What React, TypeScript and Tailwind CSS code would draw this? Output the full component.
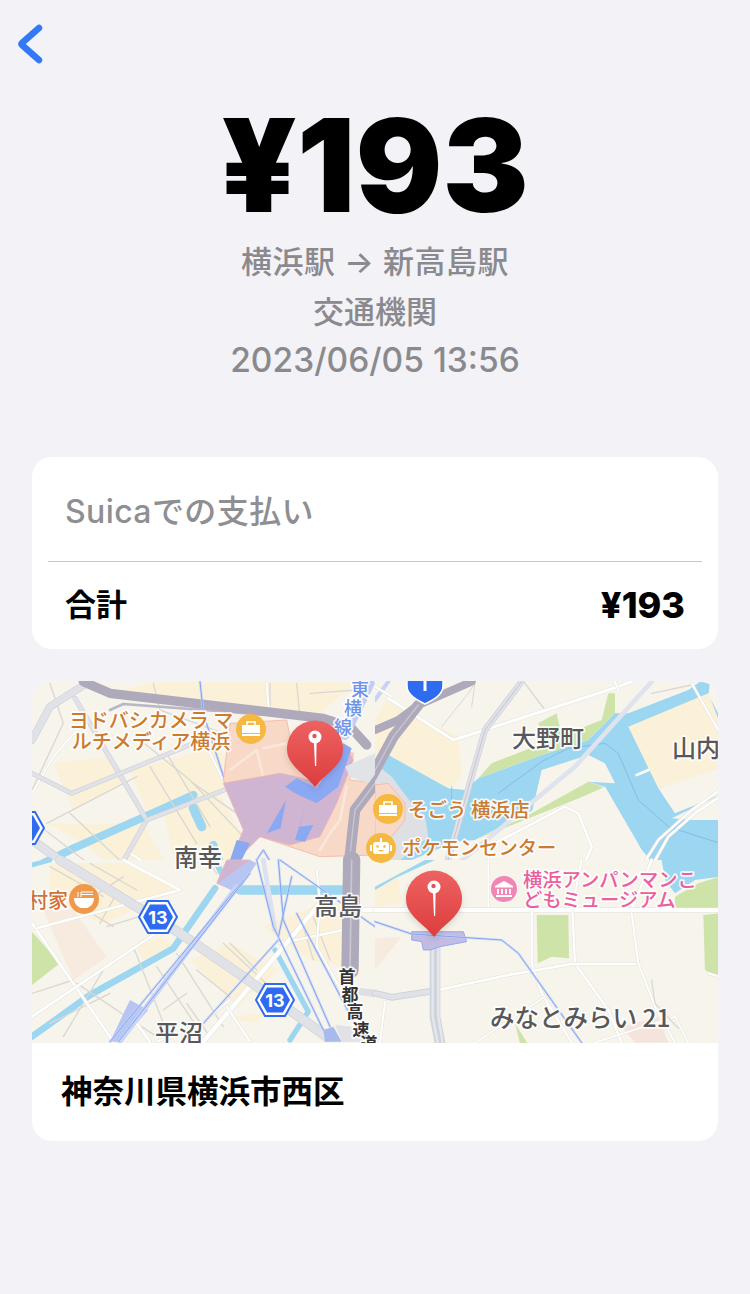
import React from "react";

const LAND = "#f7f4ec", BEIGE = "#fbf1d9", WATER = "#9dd6f1", GREEN = "#cde3a8", ROAD = "#ffffff", HWY = "#aeaabb", RAIL = "#7ea4f5", LINE = "#d9d8d2", PINK = "#f8d8c6", MAUVE = "#cfb5d2", BLUE = "#8ba9f3";

type LProps = { p: string; c: string; w: number; o?: number; d?: string };
const L = ({ p, c, w, o, d }: LProps) => (
  <polyline points={p} fill="none" stroke={c} strokeWidth={w} strokeLinecap="round" strokeLinejoin="round" opacity={o} strokeDasharray={d} />
);
const A = ({ p, c, o, s }: { p: string; c: string; o?: number; s?: string }) => <polygon points={p} fill={c} opacity={o} stroke={s} strokeWidth={s ? 2.5 : 0} />;
const Ro = ({ p, w = 9 }: { p: string; w?: number }) => (
  <>
    <L p={p} c="#e4e2dc" w={w + 3} />
    <L p={p} c={ROAD} w={w} />
  </>
);
const Art = ({ p, w = 14 }: { p: string; w?: number }) => (
  <>
    <L p={p} c="#c9ccd6" w={w + 3} />
    <L p={p} c="#e0e2e8" w={w} />
  </>
);
const Rail = ({ p }: { p: string }) => (
  <>
    <L p={p} c="#c6d3f7" w={8} o={0.7} />
    <L p={p} c={RAIL} w={3} />
  </>
);

const Pin = ({ x, y }: { x: number; y: number }) => (
  <g transform={`translate(${x} ${y})`} className="drop-shadow-md">
    <path d="M-27 8 A28 28 0 1 1 27 8 C23 20 10 26 0 39 C-10 26 -23 20 -27 8 Z" fill="url(#pinGrad)" />
    <path d="M-1.2 -8 L1.6 -8 L1.2 18 L0 18 Z" fill="#fff" />
    <circle cx="0" cy="-11" r="6.5" fill="#fff" />
    <circle cx="-0.5" cy="-12" r="2.2" fill="#e05555" />
  </g>
);

const Hex = ({ x, y, t, sm }: { x: number; y: number; t: string; sm?: boolean }) => (
  <g transform={`translate(${x} ${y})`}>
    <polygon points="-19,0 -10,-16 10,-16 19,0 10,16 -10,16" fill="#fff" stroke="#2f6bf0" strokeWidth="2" />
    <polygon points="-15,0 -8,-12.5 8,-12.5 15,0 8,12.5 -8,12.5" fill="#2f6bf0" />
    {!sm && (
      <text x="0" y="6.5" textAnchor="middle" fill="#fff" fontSize="18" fontWeight="700" fontFamily="Inter, sans-serif">
        {t}
      </text>
    )}
  </g>
);

const labelFont = "'Noto Sans CJK JP', sans-serif";
const Label = ({ x, y, t, c = "#58585a", s = 24, a = "start", w = 500 }: { x: number; y: number; t: string; c?: string; s?: number; a?: "start" | "middle" | "end"; w?: number }) => (
  <text x={x} y={y} fill={c} fontSize={s} fontWeight={w} textAnchor={a} fontFamily={labelFont} stroke="#ffffff" strokeOpacity="0.85" strokeWidth="3.5" paintOrder="stroke" strokeLinejoin="round">
    {t}
  </text>
);

const Bag = ({ x, y }: { x: number; y: number }) => (
  <g transform={`translate(${x} ${y})`}>
    <circle r="15" fill="#f5b942" />
    <rect x="-9" y="-4" width="18" height="8" fill="#fff" />
    <rect x="-9" y="5" width="18" height="2" fill="#fff" />
    <path d="M-4 -4 V-7 H4 V-4" fill="none" stroke="#fff" strokeWidth="1.5" />
  </g>
);

const MapArt = () => (
  <svg viewBox="32 681 686 362" className="block w-[686px] h-[362px]" xmlns="http://www.w3.org/2000/svg">
    <defs>
      <linearGradient id="pinGrad" x1="0" y1="0" x2="0" y2="1">
        <stop offset="0" stopColor="#ee6262" />
        <stop offset="1" stopColor="#dc3d3d" />
      </linearGradient>
      <clipPath id="qa"><rect x="0" y="0" width="1035" height="570" /></clipPath>
    </defs>
    <rect x="32" y="681" width="686" height="362" fill={LAND} />

    {/* top-left quadrant */}
    <g transform="translate(30 680) scale(.33333)" clipPath="url(#qa)">
      <A p="370,5 980,5 860,110 490,80 240,40" c={BEIGE} />
      <A p="70,250 230,230 280,310 130,390" c={BEIGE} />
      <A p="300,270 560,200 640,300 400,400 350,395" c={BEIGE} />
      <A p="50,430 340,430 420,570 260,570 160,490" c={BEIGE} />
      <A p="400,400 560,330 640,470 590,570 440,570" c={BEIGE} />
      <L p="6,566 130,505 345,410 490,345" c={WATER} w={24} />
      <L p="490,385 515,440" c={WATER} w={28} />
      <L p="550,495 575,560" c={WATER} w={24} />
      <L p="60,10 100,130 6,330" c={LINE} w={4} />
      <L p="370,10 390,90 580,160" c={LINE} w={4} />
      <L p="720,10 720,90" c={LINE} w={4} />
      <L p="800,10 810,110" c={LINE} w={4} />
      <L p="840,40 980,30" c={LINE} w={4} />
      <L p="330,180 480,300 640,470" c={LINE} w={4} />
      <L p="360,260 500,490" c={LINE} w={4} />
      <L p="410,220 540,440" c={LINE} w={4} />
      <L p="6,420 200,570" c={LINE} w={4} />
      <L p="50,430 320,290" c={LINE} w={4} />
      <L p="120,400 300,570" c={LINE} w={4} />
      <L p="490,310 620,400" c={LINE} w={4} />
      <Ro p="6,340 70,230 150,140" w={5} />
      <Ro p="300,520 380,570" w={7} />
      <Ro p="535,210 580,300" w={6} />
      <Ro p="710,10 716,90" w={6} />
      <Art p="170,10 60,80 6,180" w={20} />
      <Art p="135,55 350,420 265,570" w={12} />
      <Art p="6,280 125,340 540,170" w={11} />
      <Art p="350,420 700,285" w={11} />
      <Art p="6,480 130,570" w={24} />
      <L p="240,90 280,72 860,115" c="#b9b6c6" w={8} />
      <L p="160,5 240,40 880,115 960,140 1010,195" c={HWY} w={28} />
      <Rail p="510,5 520,100 590,320" />
      <A p="580,300 600,130 770,120 780,170 970,220 960,300 1045,310 1045,525 870,530 780,500 690,470" c={PINK} s="#f3b7a6" />
      <L p="600,270 680,210 700,290" c="#fbe6da" w={8} />
      <L p="700,205 770,190 790,250" c="#fbe6da" w={8} />
      <L p="950,320 930,420 900,460 870,510" c="#fbe6da" w={8} />
      <A p="580,310 750,280 800,290 870,310 960,220 970,240 920,370 870,470 780,495 690,470 590,570 640,450" c={MAUVE} s="#eeb6ad" />
      <A p="765,320 800,295 860,325 940,190 965,205 925,320 860,370 795,340" c={BLUE} />
      <A p="710,460 768,360 752,445" c={BLUE} />
      <A p="795,480 828,370 808,440 850,435 825,485" c={BLUE} />
      <A p="590,570 620,480 660,490 620,570" c={BLUE} />
      <A p="945,260 1045,215 1045,320 960,290" c="#e2e3e6" />
      <L p="1050,290 975,390 955,570" c={HWY} w={32} />
      <L p="1050,290 975,390 955,570" c="#c9c6d3" w={4} />
      <Rail p="660,570 700,510 735,570" />
      <L p="1020,10 945,165" c="#bfcef7" w={28} />
    </g>

    {/* top-right quadrant */}
    <g transform="translate(375 680) scale(.33333)" clipPath="url(#qa)">
      <A p="30,60 250,170 260,290 220,325 40,225 0,260 0,120" c={BEIGE} />
      <A p="40,225 220,325 270,330 310,295 500,225 640,180 720,100 760,100 940,30 975,5 1005,10 1000,45 1035,110 1035,570 850,570 800,510 690,320 640,305 300,480 240,485 40,570 0,570 0,300" c={WATER} />
      <A p="470,400 500,270 640,225 690,250 720,310 640,305 480,400" c={LAND} />
      <A p="470,400 640,305 695,325 600,360 300,480" c={GREEN} />
      <A p="760,140 1000,40 1035,130 1035,270 850,325" c={BEIGE} />
      <A p="850,325 1035,265 1035,345 900,400" c={LAND} />
      <A p="890,415 1035,345 1035,420 950,420" c={LAND} />
      <A p="300,480 600,360 690,320 800,510 850,570 320,570" c={LAND} />
      <A p="310,295 350,250 680,120 700,40 720,40 720,100 640,180 500,225" c={GREEN} />
      <A p="490,130 545,100 560,170 510,180" c={GREEN} />
      <L p="230,320 230,370" c="#7fb6e2" w={2} />
      <L p="370,340 500,245 580,205 690,190 730,220 790,360 880,440 1035,490" c="#7fb6e2" w={2.5} />
      <L p="785,285 820,270" c="#ffffff" w={8} />
      <L p="250,550 600,260 830,5" c="#dfe3ee" w={14} />
      <L p="450,10 510,90" c={LINE} w={4} />
      <L p="200,140 280,40 300,10 290,80" c={LINE} w={3} />
      <L p="830,40 950,15" c={LINE} w={4} />
      <Ro p="40,55 235,180 700,30 770,5" w={9} />
      <Ro p="340,500 340,570" w={7} />
      <Ro p="340,500 570,380 610,400 650,500 620,570" w={8} />
      <Ro p="720,5 730,30" w={6} />
      <Ro p="950,10 1035,160" w={6} />
      <Art p="440,5 330,150 210,570" w={16} />
      <L p="440,5 330,150 210,570" c="#c2c5d2" w={3} />
      <Ro p="800,560 850,480 950,390 1035,330" w={7} />
      <Ro p="830,560 880,470 960,400 1035,350" w={7} />
      <A p="0,250 50,290 110,370 150,410 160,470 40,570 0,570" c="#dfe0e3" />
      <A p="0,315 40,310 90,370 90,420 50,470 0,480" c={PINK} s="#f3b7a6" />
      <L p="0,150 70,120 130,75 290,5" c={HWY} w={24} />
      <L p="130,75 55,170 -10,290" c={HWY} w={32} />
      <L p="130,75 55,170 -10,290" c="#c9c6d3" w={4} />
      <L p="40,5 0,60" c="#c6d3f7" w={12} />
      <Ro p="50,50 0,20" w={6} />
    </g>

    {/* bottom-left quadrant */}
    <g transform="translate(30 860) scale(.33333)">
      <rect x="0" y="0" width="1035" height="550" fill={LAND} />
      <A p="60,10 280,10 450,90 220,190 60,120" c={BEIGE} />
      <A p="40,150 130,150 230,290 130,360" c="#f6ebde" />
      <A p="320,260 400,230 430,260 340,300" c={BEIGE} />
      <A p="480,300 600,250 745,330 620,440 540,360" c={BEIGE} />
      <A p="600,470 700,460 680,490 620,480" c={BEIGE} />
      <A p="700,200 870,130 940,130 940,320 840,300" c={BEIGE} />
      <A p="6,215 90,310 6,375" c={GREEN} />
      <L p="6,15 60,0" c={WATER} w={14} />
      <L p="555,85 430,265 180,405 6,530" c={WATER} w={20} />
      <L p="630,90 720,90 945,90" c={WATER} w={28} />
      <L p="555,0 575,40" c={WATER} w={18} />
      <L p="735,270 835,455 780,540" c={WATER} w={16} />
      {["60,20 220,110","120,10 280,100","180,10 320,90","260,100 210,190","280,50 160,130","120,120 250,200","230,200 360,160",
        "140,370 380,530","220,330 100,530","310,260 420,540","380,320 500,500","440,280 580,500","500,330 600,410","470,430 540,530","580,250 740,400","600,250 680,330","820,200 850,300","850,170 900,300","60,490 240,400","400,450 470,400","530,0 560,40","6,400 130,360"].map((p) => (
        <L key={p} p={p} c={LINE} w={4} />
      ))}
      <Ro p="6,190 250,545" w={8} />
      <Ro p="6,470 370,225" w={8} />
      <Ro p="450,90 20,205" w={8} />
      <Ro p="280,0 450,90" w={8} />
      <Ro p="750,250 940,210" w={7} />
      <Ro p="860,30 870,130 860,260 950,420" w={6} />
      <Ro p="320,490 360,545" w={8} />
      <Ro p="870,130 520,545" w={13} />
      <Ro p="600,420 500,500 380,545" w={6} />
      <Ro p="590,440 660,545" w={6} />
      <Ro p="1000,150 1040,150" w={12} />
      <L p="90,0 450,220 640,350 890,530" c="#cfd2da" w={30} />
      <L p="90,0 450,220 640,350 890,530" c="#e0e2e7" w={26} />
      <L p="700,0 735,210" c="#dde1ee" w={14} />
      <L p="965,0 960,330" c={HWY} w={52} />
      <L p="965,0 960,330" c="#c9c6d3" w={5} />
      <L p="990,395 1035,400" c="#dcdfe6" w={22} />
      <A p="240,545 300,420 355,450 270,545" c="#b7c5f3" />
      <A p="560,70 590,0 660,0 610,90" c={MAUVE} s="#eeb6ad" />
      <A p="565,70 620,100 680,10 660,0" c="#b9c6f2" />
      <L p="620,80 270,545" c="#c9d5f5" w={14} />
      <Rail p="640,60 240,545" />
      <Rail p="660,40 265,545" />
      <Rail p="745,240 520,490" />
      <Rail p="680,0 730,200 880,510" />
      <Rail p="745,0 760,180 900,500" />
      <Rail p="785,50 745,230" />
      <Rail p="750,0 1035,200" />
      <A p="880,510 910,500 935,545 885,545" c="#a9b9ee" />
      <A p="915,495 970,500 1000,545 935,545" c="#e0e2e8" />
      <Rail p="800,160 1000,540" />
    </g>

    {/* bottom-right quadrant */}
    <g transform="translate(375 860) scale(.33333)">
      <rect x="0" y="0" width="1035" height="550" fill={LAND} />
      <A p="0,90 70,50 80,130 0,145" c={BEIGE} />
      <A p="0,235 80,230 0,330" c="#f6ebde" />
      <A p="0,80 150,0 180,0 60,55 0,90" c={WATER} />
      <A p="860,0 1035,0 1035,50 960,60 900,100 870,60" c={WATER} />
      <A p="900,110 970,70 1035,50 1035,145 900,145" c={GREEN} />
      <A p="485,165 580,165 582,295 530,290 488,310" c={GREEN} />
      <A p="985,165 1035,160 1035,355 990,330" c={GREEN} />
      <A p="420,490 470,570 440,570" c={GREEN} />
      <A p="740,500 850,470 880,548 780,548" c="#f4e4dd" />
      <Ro p="340,0 340,150" w={6} />
      <Ro p="620,0 590,150" w={6} />
      <Ro p="830,0 770,150" w={8} />
      <Ro p="0,150 1035,150" w={12} />
      <Ro p="470,150 470,310 500,400 590,548" w={7} />
      <Ro p="592,150 600,310 700,450 740,548" w={7} />
      <Ro p="770,160 790,310 840,440 900,548" w={6} />
      <Ro p="190,390 400,345 590,312 780,312" w={7} />
      <Ro p="1000,340 1035,350" w={6} />
      <Ro p="300,548 510,410" w={5} />
      <Ro p="30,425 15,548" w={6} />
      <Ro p="660,548 900,470 940,548" w={5} />
      <L p="830,360 840,430 910,505" c={LINE} w={4} />
      <L p="0,400 50,412 180,392" c="#cfd3dc" w={20} />
      <L p="0,400 50,412 180,392" c="#e0e2e8" w={14} />
      <L p="180,250 180,470 195,548" c="#cfd3dc" w={32} />
      <L p="173,250 173,470 188,548" c="#e5e7ec" w={7} />
      <L p="190,250 190,470 203,548" c="#e5e7ec" w={7} />
      <A p="110,215 265,215 275,245 195,260 165,270 145,270 140,245 110,240" c="#c2bbe2" s="#8a9ff0" />
      <Rail p="0,185 110,222 380,240 430,280 620,548" />
    </g>

    {/* labels */}
    <Label x={151} y={728} a="middle" t="ヨドバシカメラ マ" c="#cc7a2e" s={20} />
    <Label x={151} y={749} a="middle" t="ルチメディア横浜" c="#cc7a2e" s={20} />
    <Label x={174} y={866} t="南幸" s={24} />
    <Label x={314} y={915} t="高島" s={24} />
    <Label x={512} y={747} t="大野町" s={24} />
    <Label x={672} y={757} t="山内" s={24} />
    <Label x={408} y={817} t="そごう 横浜店" c="#cc7a2e" s={19.5} />
    <Label x={402} y={855} t="ポケモンセンター" c="#cc7a2e" s={19.3} />
    <Label x={523} y={887} t="横浜アンパンマンこ" c="#e9609c" s={19.3} />
    <Label x={523} y={907} t="どもミュージアム" c="#e9609c" s={19.3} />
    <Label x={490} y={1027} t="みなとみらい 21" s={24.5} />
    <Label x={155} y={1042} t="平沼" s={24} />
    <Label x={28} y={908} t="村家" c="#d0703a" s={20} />
    <Label x={347} y={983} a="middle" t="首" c="#333" s={17} w={700} />
    <Label x={350} y={1001} a="middle" t="都" c="#333" s={17} w={700} />
    <Label x={355} y={1018} a="middle" t="高" c="#333" s={17} w={700} />
    <Label x={361} y={1036} a="middle" t="速" c="#333" s={17} w={700} />
    <Label x={369} y={1050} a="middle" t="道" c="#333" s={17} w={700} />
    <Label x={360} y={696} a="middle" t="東" c="#6f93e8" s={18} />
    <Label x={353} y={715} a="middle" t="横" c="#6f93e8" s={18} />
    <Label x={343} y={734} a="middle" t="線" c="#6f93e8" s={18} />

    {/* POI */}
    <Bag x={251} y={729} />
    <Bag x={388} y={809} />
    <g transform="translate(381 848)">
      <circle r="15" fill="#f5b942" />
      <rect x="-8" y="-6" width="16" height="12" rx="3" fill="#fff" />
      <rect x="-11" y="-3" width="2" height="6" fill="#fff" />
      <rect x="9" y="-3" width="2" height="6" fill="#fff" />
      <rect x="-1" y="-10" width="2" height="4" fill="#fff" />
      <circle cx="-3.5" cy="-1.5" r="1.3" fill="#f5b942" />
      <circle cx="3.5" cy="-1.5" r="1.3" fill="#f5b942" />
      <path d="M-3 2 Q0 5 3 2" fill="#f5b942" />
    </g>
    <g transform="translate(84 899)">
      <circle r="15" fill="#f0994a" />
      <path d="M-10 -1 H10 C10 5 6 8 3 9 H-3 C-6 8 -10 5 -10 -1 Z" fill="#fff" />
      <path d="M-6 -2 V-7 M-3 -2 V-7 M-3 -7 H9 M-3 -4.5 H9" stroke="#fff" strokeWidth="1" fill="none" />
    </g>
    <g transform="translate(504 889)">
      <circle r="13" fill="#ef86b6" />
      <path d="M0 -8 L9 -3 V-1.5 H-9 V-3 Z M-8 6 H8 V8 H-8 Z" fill="#fff" />
      <path d="M-6 0 V5 M-2 0 V5 M2 0 V5 M6 0 V5" stroke="#fff" strokeWidth="1.8" />
    </g>

    <Hex x={158} y={917} t="13" />
    <Hex x={275} y={1000} t="13" />
    <Hex x={25} y={828} t="" sm />
    <g transform="translate(425 686)">
      <path d="M-18 -12 H18 V0 C18 9 8 14 0 18 C-8 14 -18 9 -18 0 Z" fill="#2f6bf0" stroke="#fff" strokeWidth="1.5" />
      <rect x="-1.5" y="-8" width="3" height="13" fill="#fff" />
    </g>

    <Pin x={315} y={748} />
    <Pin x={434} y={898} />
  </svg>
);

export default function App() {
  return (
    <div
      className="w-[750px] h-[1294px] bg-[#f2f2f7] overflow-hidden"
      style={{ fontFamily: "Inter, 'Noto Sans CJK JP', sans-serif" }}
    >
      <div className="pt-[24px] pl-[17px] h-[104px]">
        <svg width="28" height="42" viewBox="0 0 28 42" fill="none">
          <path d="M22 4 L5 19 Q4 20 5 21 L22 36" stroke="#3478f6" strokeWidth="6.5" strokeLinecap="round" strokeLinejoin="round" />
        </svg>
      </div>

      <h1 className="text-center text-black font-black text-[129px] leading-[122px] h-[124px]">¥193</h1>

      <div className="mt-[9px] text-center text-[#8a8a8e] text-[31px] leading-[49.5px] font-medium">
        <div className="tracking-[0.5px]">横浜駅 → 新高島駅</div>
        <div>交通機関</div>
        <div className="text-[33.5px]">2023/06/05 13:56</div>
      </div>

      <div className="mx-[32px] mt-[71px] rounded-[20px] bg-white h-[192px] px-[16px]">
        <div className="h-[105px] pt-[6px] border-b border-[#c6c6c8] flex items-center px-[17px] text-[32px] font-medium tracking-[0.4px] text-[#8e8e93]">
          Suicaでの支払い
        </div>
        <div className="h-[87px] flex items-center justify-between px-[17px] text-[31px] font-bold text-black">
          <span>合計</span>
          <span className="text-[36px] font-extrabold">¥193</span>
        </div>
      </div>

      <div className="mx-[32px] mt-[32px] rounded-[20px] bg-white overflow-hidden">
        <MapArt />
        <div className="h-[98px] flex items-center pl-[29px] text-[31.5px] font-bold text-black">
          神奈川県横浜市西区
        </div>
      </div>
    </div>
  );
}
